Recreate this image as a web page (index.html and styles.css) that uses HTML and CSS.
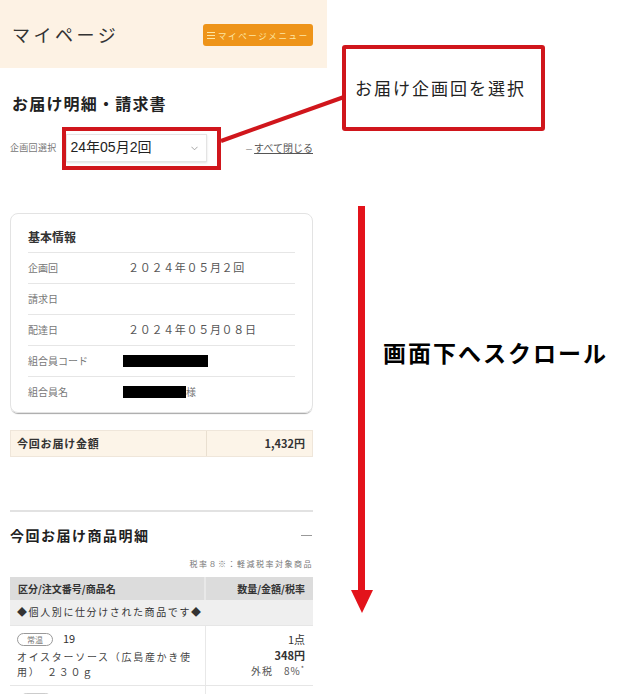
FILE: index.html
```html
<!DOCTYPE html>
<html lang="ja">
<head>
	<meta charset="utf-8">
	<meta name="viewport" content="width=device-width">
	<title>お届け明細・請求書</title>
	<link rel="stylesheet" href="styles.css">
</head>
<body>

<div class="sheet">

	<main class="mypage">
		<header class="mypage-header">
			<h1 class="mypage-title">マイページ</h1>
			<div class="menu-btn">
				<svg class="menu-icon" viewBox="0 0 8 7">
					<rect x="0" y="0" width="8" height="1"/>
					<rect x="0" y="3" width="8" height="1"/>
					<rect x="0" y="6" width="8" height="1"/>
				</svg>
				<span>マイページメニュー</span>
			</div>
		</header>

		<section class="content">
			<h2 class="page-heading">お届け明細・請求書</h2>

			<div class="select-row">
				<span class="select-label">企画回選択</span>
				<div class="select-box">
					<span>24年05月2回</span>
					<svg class="chevron" viewBox="0 0 8 5">
						<polyline points="0.5,0.5 4,4 7.5,0.5"/>
					</svg>
				</div>
				<a class="close-all"><span class="dash">－</span><span class="close-link">すべて閉じる</span></a>
			</div>

			<div class="info-card">
				<h3 class="info-title">基本情報</h3>
				<div class="info-row">
					<span class="info-label">企画回</span>
					<span class="info-value">２０２４年０５月２回</span>
				</div>
				<div class="info-row">
					<span class="info-label">請求日</span>
					<span class="info-value"></span>
				</div>
				<div class="info-row">
					<span class="info-label">配達日</span>
					<span class="info-value">２０２４年０５月０８日</span>
				</div>
				<div class="info-row">
					<span class="info-label">組合員コード</span>
					<span class="info-value info-masked"><span class="mask mask-code"></span></span>
				</div>
				<div class="info-row">
					<span class="info-label">組合員名</span>
					<span class="info-value info-masked"><span class="mask mask-name"></span><span class="honorific">様</span></span>
				</div>
			</div>

			<div class="total-row">
				<span class="total-label">今回お届け金額</span>
				<span class="total-value">1,432円</span>
			</div>

			<div class="items">
				<div class="items-head">
					<h2 class="items-title">今回お届け商品明細</h2>
					<span class="items-toggle"></span>
				</div>
				<p class="tax-note">税率８※：軽減税率対象商品</p>

				<table class="items-table">
					<colgroup>
						<col class="col-name">
						<col class="col-qty">
					</colgroup>
					<thead>
						<tr>
							<th>区分/注文番号/商品名</th>
							<th class="num">数量/金額/税率</th>
						</tr>
					</thead>
					<tbody>
						<tr class="group-row">
							<td colspan="2">◆個人別に仕分けされた商品です◆</td>
						</tr>
						<tr>
							<td>
								<div class="item-meta"><span class="badge">常温</span><span class="item-no">19</span></div>
								<div class="item-name">オイスターソース（広島産かき使用）　２３０ｇ</div>
							</td>
							<td class="num">
								<div class="qty">1点</div>
								<div class="price">348円</div>
								<div class="tax">外税　8%<sup>*</sup></div>
							</td>
						</tr>
						<tr>
							<td>
								<div class="item-meta"><span class="badge badge-filled"></span></div>
							</td>
							<td class="num"></td>
						</tr>
					</tbody>
				</table>
			</div>
		</section>
	</main>

	<!-- annotations drawn over the screenshot -->
	<div class="notes">
		<svg class="notes-lines" viewBox="0 0 617 694">
			<line x1="221" y1="141" x2="344" y2="97" class="lead"/>
			<line x1="361.5" y1="206" x2="361.5" y2="594" class="arrow-shaft"/>
			<polygon points="351,590 373,590 362,613" class="arrow-head"/>
		</svg>
		<div class="select-mark"></div>
		<div class="callout">お届け企画回を選択</div>
		<div class="scroll-note">画面下へスクロール</div>
	</div>

</div>

</body>
</html>
```

FILE: styles.css
```css
* {
	box-sizing: border-box;
	margin: 0;
	padding: 0;
}

body {
	background-color: #FFF;
	color: #333;
	font-family: "Noto Sans CJK JP", "Noto Sans", sans-serif;
	font-size: 10px;
	line-height: 1.4;
}

.sheet {
	position: relative;
	width: 617px;
	height: 694px;
	overflow: hidden;
}

.mypage {
	width: 327px;
}

/* header */

.mypage-header {
	display: flex;
	justify-content: space-between;
	align-items: center;
	height: 68px;
	padding: 0 14px 0 12px;
	background-color: #FDF2E4;
}

.mypage-title {
	font-size: 18px;
	font-weight: 400;
	letter-spacing: 3.5px;
	line-height: 24px;
	color: #333;
}

.menu-btn {
	display: flex;
	align-items: center;
	gap: 3px;
	width: 110px;
	height: 22px;
	padding-left: 4px;
	margin-top: 2px;
	border-radius: 3px;
	background-color: #EE9419;
	color: #FDE6A2;
	font-size: 8.5px;
	letter-spacing: 1.6px;
	line-height: 22px;
}

.menu-icon {
	width: 8px;
	height: 7px;
	fill: #FDE6A2;
}

/* content */

.content {
	padding: 0 14px 0 10px;
}

.page-heading {
	margin-top: 25px;
	padding-left: 2px;
	font-size: 16px;
	font-weight: 700;
	letter-spacing: 1.2px;
	line-height: 20px;
	color: #222;
}

.select-row {
	display: flex;
	align-items: center;
	margin-top: 21px;
	height: 28px;
}

.select-label {
	font-size: 9px;
	color: #777;
	letter-spacing: 0.3px;
}

.select-box {
	display: flex;
	justify-content: space-between;
	align-items: center;
	width: 141px;
	height: 28px;
	margin-left: 9px;
	padding: 0 8px 0 4px;
	border: 1px solid #E4E4E4;
	box-shadow: 0 1px 2px rgba(0, 0, 0, .12);
	font-family: "Liberation Sans", "Noto Sans CJK JP", sans-serif;
	font-size: 14px;
	color: #222;
}

.chevron {
	width: 7px;
	height: 5px;
	fill: none;
	stroke: #999;
	stroke-width: 1;
}

.close-all {
	margin-left: auto;
	font-size: 10px;
	color: #555;
}

.dash {
	margin-right: 1px;
	font-size: 8px;
	color: #777;
}

.close-link {
	text-decoration: underline;
}

/* basic info card */

.info-card {
	margin-top: 51px;
	padding: 15px 17px 5px;
	border: 1px solid #E3E3E3;
	border-radius: 8px;
	box-shadow: 0 2px 1px -1px rgba(0, 0, 0, .35);
}

.info-title {
	margin-bottom: 7px;
	font-size: 12px;
	font-weight: 700;
	line-height: 16px;
	color: #333;
}

.info-row {
	display: grid;
	grid-template-columns: 95px 1fr;
	align-items: center;
	height: 31px;
	border-top: 1px solid #E6E6E6;
}

.info-label {
	font-size: 10px;
	color: #777;
}

.info-value {
	padding-left: 5px;
	font-size: 11px;
	letter-spacing: 0.7px;
	color: #555;
}

.info-masked {
	display: flex;
	align-items: center;
	padding-left: 0;
}

.mask {
	display: inline-block;
	height: 12px;
	background-color: #000;
}

.mask-code {
	width: 85px;
}

.mask-name {
	width: 63px;
}

.honorific {
	font-size: 10px;
	color: #777;
}

/* total */

.total-row {
	display: grid;
	grid-template-columns: 195px 1fr;
	align-items: center;
	height: 27px;
	margin-top: 17px;
	border: 1px solid #EFE6DA;
	background-color: #FCF4E8;
	font-size: 11px;
	font-weight: 700;
	color: #333;
}

.total-label {
	padding-left: 6px;
	letter-spacing: 0.8px;
}

.total-value {
	height: 100%;
	padding-right: 7px;
	border-left: 1px solid #E9DFD0;
	text-align: right;
	line-height: 25px;
}

/* items */

.items {
	margin-top: 53px;
	border-top: 2px solid #E2E2E2;
}

.items-head {
	display: flex;
	justify-content: space-between;
	align-items: center;
	margin-top: 13px;
	height: 20px;
}

.items-title {
	font-size: 14px;
	font-weight: 700;
	letter-spacing: 1.5px;
	line-height: 20px;
	color: #222;
}

.items-toggle {
	width: 11px;
	height: 1px;
	margin-right: 1px;
	background-color: #999;
}

.tax-note {
	margin-top: 13px;
	font-size: 8px;
	letter-spacing: 1.5px;
	line-height: 12px;
	color: #777;
	text-align: right;
}

.items-table {
	width: 100%;
	margin-top: 7px;
	border-collapse: collapse;
	table-layout: fixed;
}

.col-name {
	width: 195px;
}

.items-table th {
	height: 23px;
	padding: 0 8px;
	background-color: #DCDCDC;
	font-size: 10px;
	font-weight: 700;
	text-align: left;
	color: #333;
}

.items-table th.num {
	border-left: 2px solid #E8E8E8;
	text-align: right;
}

.group-row td {
	height: 23px;
	padding: 0 7px;
	background-color: #EFEFEF;
	font-size: 10px;
	letter-spacing: 1.6px;
	color: #333;
}

.items-table td {
	padding: 5px 8px 6px 7px;
	border-bottom: 1px solid #E6E6E6;
	vertical-align: top;
}

.items-table td.num {
	padding-right: 8px;
	border-left: 1px solid #E8E8E8;
	text-align: right;
	font-size: 11px;
	line-height: 16px;
	color: #333;
}

.item-meta {
	display: flex;
	align-items: center;
	height: 18px;
	padding-bottom: 2px;
}

.badge {
	display: inline-block;
	height: 13px;
	padding: 0 9px;
	border: 1px solid #999;
	border-radius: 7px;
	font-size: 8px;
	line-height: 11px;
	color: #777;
}

.badge-filled {
	width: 32px;
	margin-left: 3px;
	border-color: #CCC;
	background-color: #CCC;
}

.item-no {
	margin-left: 10px;
	font-size: 11px;
	color: #333;
}

.item-name {
	font-size: 10px;
	letter-spacing: 1.7px;
	line-height: 15px;
	color: #444;
}

.price {
	font-weight: 700;
}

.tax {
	font-size: 10px;
	letter-spacing: 1px;
	color: #555;
}

.tax sup {
	font-size: 7px;
	line-height: 0;
}

/* annotations */

.notes {
	position: absolute;
	top: 0;
	left: 0;
	width: 617px;
	height: 694px;
	pointer-events: none;
}

.notes-lines {
	position: absolute;
	top: 0;
	left: 0;
	width: 617px;
	height: 694px;
}

.lead {
	stroke: #D0161C;
	stroke-width: 4;
}

.arrow-shaft {
	stroke: #E3131B;
	stroke-width: 7;
}

.arrow-head {
	fill: #E3131B;
}

.select-mark {
	position: absolute;
	top: 127px;
	left: 62px;
	width: 159px;
	height: 43px;
	border: 4px solid #D0161C;
}

.callout {
	position: absolute;
	top: 45px;
	left: 342px;
	display: flex;
	align-items: center;
	width: 203px;
	height: 86px;
	padding-left: 9px;
	border: 4px solid #D0161C;
	border-radius: 3px;
	background-color: #FFF;
	font-size: 17px;
	letter-spacing: 2px;
	color: #222;
}

.scroll-note {
	position: absolute;
	top: 337px;
	left: 383px;
	font-size: 23px;
	font-weight: 700;
	letter-spacing: 2px;
	line-height: 30px;
	color: #000;
}
```
